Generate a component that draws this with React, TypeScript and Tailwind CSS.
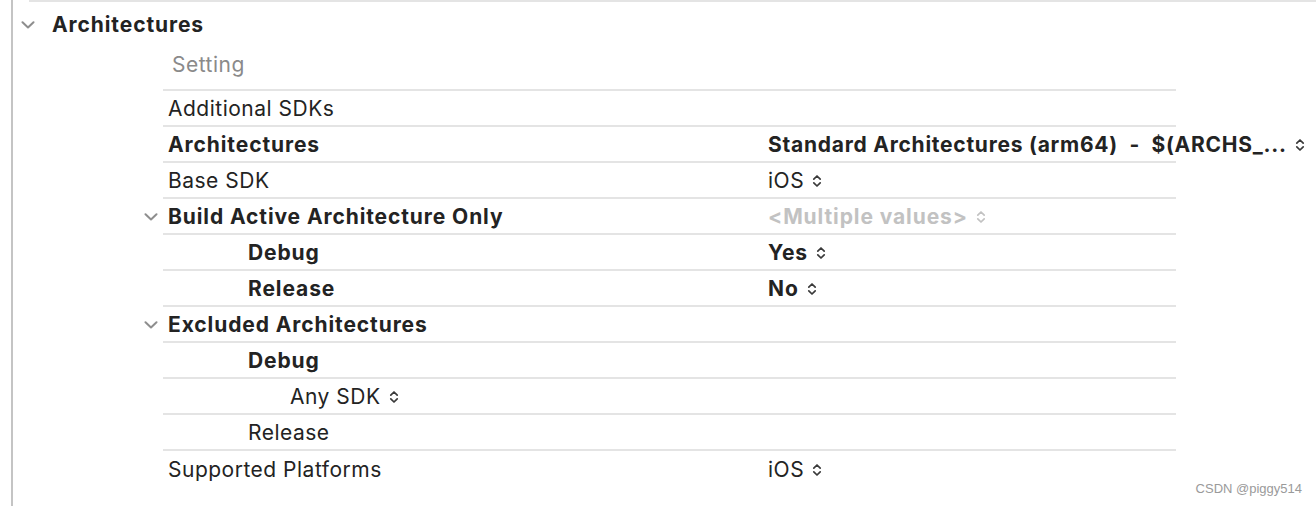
import React from "react";

const Chevron = ({ className }: { className?: string }) => (
  <svg width="14" height="8" viewBox="0 0 14 8" className={className} fill="none">
    <path d="M1.5 1.2 L7 6.5 L12.5 1.2" stroke="#8e8e8e" strokeWidth="2" strokeLinecap="round" strokeLinejoin="round" />
  </svg>
);

const UpDown = ({ color = "#3a3a3a" }: { color?: string }) => (
  <svg width="10" height="14" viewBox="0 0 10 14" fill="none" className="ml-[8px] shrink-0">
    <path d="M1.8 5.2 L5 2 L8.2 5.2" stroke={color} strokeWidth="1.7" strokeLinecap="round" strokeLinejoin="round" />
    <path d="M1.8 8.8 L5 12 L8.2 8.8" stroke={color} strokeWidth="1.7" strokeLinecap="round" strokeLinejoin="round" />
  </svg>
);

type Row = {
  label: string;
  bold?: boolean;
  indent?: number;
  chevron?: boolean;
  value?: string;
  valueBold?: boolean;
  valueMuted?: boolean;
  valueTight?: boolean;
  last?: boolean;
};

const rows: Row[] = [
  { label: "Additional SDKs" },
  { label: "Architectures", bold: true, value: "Standard Architectures (arm64)  -  $(ARCHS_...", valueBold: true, valueTight: true },
  { label: "Base SDK", value: "iOS" },
  { label: "Build Active Architecture Only", bold: true, chevron: true, value: "<Multiple values>", valueBold: true, valueMuted: true },
  { label: "Debug", bold: true, indent: 1, value: "Yes", valueBold: true },
  { label: "Release", bold: true, indent: 1, value: "No", valueBold: true },
  { label: "Excluded Architectures", bold: true, chevron: true },
  { label: "Debug", bold: true, indent: 1 },
  { label: "Any SDK", indent: 2, value: "" },
  { label: "Release", indent: 1 },
  { label: "Supported Platforms", value: "iOS", last: true },
];

const reg = "font-normal tracking-[0.5px]";
const bld = "font-bold tracking-[0.9px]";

export default function App() {
  return (
    <div
      className="relative flex h-[506px] w-[1316px] overflow-hidden bg-white text-[#232323]"
      style={{ fontFamily: "Inter, 'Noto Sans', sans-serif" }}
    >
      <div className="w-[11px] shrink-0" />
      <div className="flex flex-1 flex-col border-l-2 border-[#c4c4c4]">
        <div className="ml-[16px] h-[2px] bg-[#e4e4e4]" />
        <div className="flex h-[44px] items-center pt-[2px]">
          <div className="flex w-[39px] pl-[8px]">
            <Chevron />
          </div>
          <span className={"text-[21px] " + bld}>Architectures</span>
        </div>
        <div className="flex h-[43px] items-center pb-[5px] pl-[159px]">
          <span className={"text-[21px] text-[#8a8a8a] " + reg}>Setting</span>
        </div>
        <div className="ml-[150px] h-[2px] w-[1013px] bg-[#e4e4e4]" />
        {rows.map((r, i) => (
          <div key={i} className="flex">
            <div className="flex w-[150px] shrink-0 items-center justify-end pr-[5px]">
              {r.chevron && <Chevron />}
            </div>
            <div
              className={
                "flex h-[36px] w-[1013px] shrink-0 items-center whitespace-pre pt-[2px] text-[21px] " +
                (r.last ? "" : "border-b-2 border-[#e4e4e4]")
              }
            >
              <div className="flex w-[605px] shrink-0 items-center pl-[5px]">
                <span
                  className={
                    (r.bold ? bld : reg) +
                    (r.indent === 1 ? " pl-[80px]" : r.indent === 2 ? " pl-[122px]" : "")
                  }
                >
                  {r.label}
                </span>
                {r.label === "Any SDK" && <UpDown />}
              </div>
              {r.value !== undefined && r.value !== "" && (
                <div className="flex items-center">
                  <span
                    className={
                      (r.valueTight ? "font-bold tracking-[0.75px]" : r.valueBold ? bld : reg) +
                      (r.valueMuted ? " text-[#c2c2c2]" : "")
                    }
                  >
                    {r.value}
                  </span>
                  <UpDown color={r.valueMuted ? "#c2c2c2" : "#3a3a3a"} />
                </div>
              )}
            </div>
          </div>
        ))}
      </div>
      <div
        className="absolute right-[14px] bottom-[8px] text-[13px] text-[#9a9a9a]"
        style={{ fontFamily: "'Liberation Sans Narrow', 'Liberation Sans', sans-serif" }}
      >
        CSDN @piggy514
      </div>
    </div>
  );
}
